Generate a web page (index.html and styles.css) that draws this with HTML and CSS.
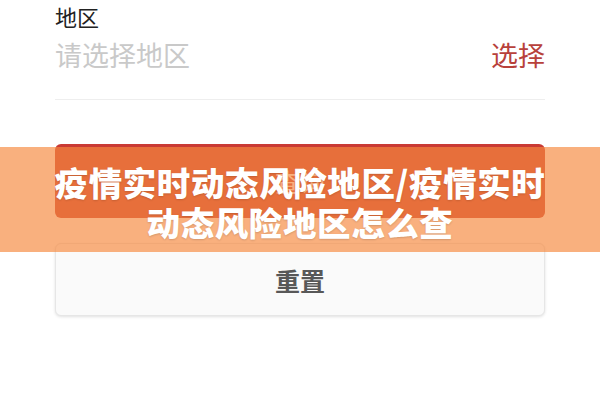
FILE: index.html
```html
<!DOCTYPE html>
<html lang="zh-CN">
<head>
<meta charset="utf-8">
<link rel="stylesheet" href="styles.css">
</head>
<body>
<div class="page">
  <div class="field">
    <div class="label">地区</div>
    <div class="row">
      <span class="placeholder">请选择地区</span>
      <span class="pick">选择</span>
    </div>
  </div>
  <div class="btn btn-primary">查询</div>
  <div class="btn btn-reset">重置</div>
</div>
<div class="band">
  <div class="title">疫情实时动态风险地区/疫情实时<br>动态风险地区怎么查</div>
</div>
</body>
</html>
```

FILE: styles.css
```css
html, body {
  margin: 0;
  padding: 0;
  background: #ffffff;
  font-family: "Noto Sans CJK SC", "Noto Sans", sans-serif;
}
.page {
  width: 600px;
  height: 400px;
  box-sizing: border-box;
  padding: 0 55px;
}
.field {
  padding-top: 5px;
  border-bottom: 1px solid #eeeeee;
}
.label {
  font-size: 22px;
  line-height: 22px;
  color: #222222;
}
.row {
  display: flex;
  justify-content: space-between;
  align-items: center;
  margin-top: 14px;
  padding-bottom: 31px;
  font-size: 27px;
  line-height: 27px;
}
.placeholder {
  color: #c9c9c9;
}
.pick {
  color: #b8413b;
}
.btn {
  height: 73px;
  border-radius: 6px;
  display: flex;
  align-items: center;
  justify-content: center;
  font-size: 25px;
  box-sizing: border-box;
}
.btn-primary {
  margin-top: 44px;
  height: 74px;
  background: #c93a34;
  color: #ffffff;
}
.btn-reset {
  margin-top: 25px;
  background: #fafafa;
  border: 1px solid #e6e6e6;
  box-shadow: 0 1px 3px rgba(0, 0, 0, 0.12);
  color: #585858;
  font-weight: 700;
}
.band {
  position: absolute;
  left: 0;
  top: 147px;
  width: 600px;
  height: 105px;
  box-sizing: border-box;
  padding-top: 15px;
  background: rgba(246, 137, 63, 0.67);
}
.title {
  text-align: center;
  white-space: nowrap;
  color: #ffffff;
  font-size: 33.5px;
  line-height: 40px;
  font-weight: 900;
  letter-spacing: 0.6px;
  text-shadow: 0 1px 2px rgba(0, 0, 0, 0.15);
}
```
